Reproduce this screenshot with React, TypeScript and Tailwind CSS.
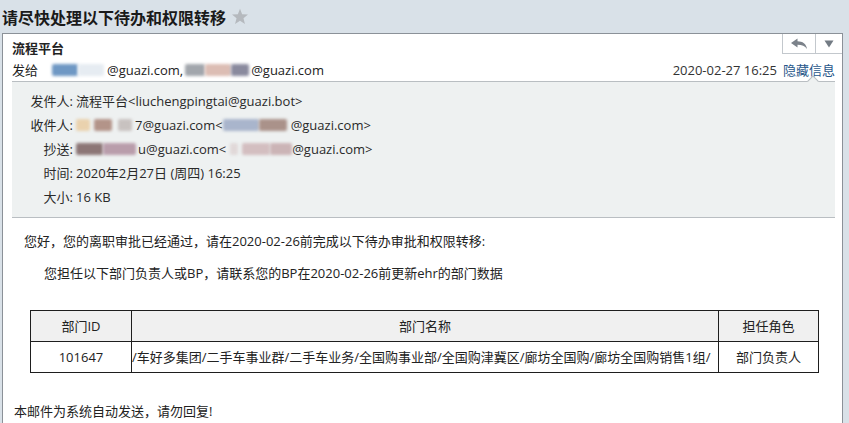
import React from "react";

function Blur({ w, c, ml = 0 }: { w: number; c: string; ml?: number }) {
  return (
    <span
      className="inline-block h-[12px] align-middle blur-[1.5px] rounded-[2px]"
      style={{ width: w, background: c, marginLeft: ml }}
    />
  );
}

export default function App() {
  return (
    <div className="w-[849px] h-[423px] overflow-hidden bg-[#d9e1e8] font-['Open_Sans','Noto_Sans_CJK_SC',sans-serif] text-[#222] flex flex-col">
      {/* title bar */}
      <div className="h-[33px] shrink-0 flex items-center pl-[2px]">
        <span className="text-[16px] font-bold leading-[20px] text-[#1a1a1a] font-['Noto_Sans_CJK_SC',sans-serif]">请尽快处理以下待办和权限转移</span>
        <svg width="18" height="17" viewBox="0 0 24 23" className="ml-[5px]">
          <path d="M12 1 L14.9 8.3 L22.8 8.8 L16.7 13.8 L18.7 21.5 L12 17.3 L5.3 21.5 L7.3 13.8 L1.2 8.8 L9.1 8.3 Z" fill="#b5b9be" />
        </svg>
      </div>

      {/* panel */}
      <div className="ml-[2px] w-[841px] flex-1 bg-white border-l border-t border-r border-[#8b9198] flex flex-col">
        {/* header row 1 */}
        <div className="h-[24px] flex justify-between items-start">
          <div className="pl-[9px] pt-[4px] text-[13px] leading-[20px] font-bold">流程平台</div>
          <div className="h-[20px] flex border-l border-b border-[#c3c8cd] bg-white">
            <div className="w-[33px] h-full flex items-center justify-center border-r border-[#c3c8cd]">
              <svg width="18" height="12" viewBox="0 0 18 12">
                <path d="M1 5 L7.5 0.5 L7.5 3.3 C12.5 3.3 16.5 6 17 11 C15 8 12 6.8 7.5 6.8 L7.5 9.6 Z" fill="#7b828a" />
              </svg>
            </div>
            <div className="w-[26px] h-full flex items-center justify-center">
              <svg width="10" height="8" viewBox="0 0 10 8">
                <path d="M0.5 0.5 L9.5 0.5 L5 7.5 Z" fill="#737b84" />
              </svg>
            </div>
          </div>
        </div>
        {/* header row 2 */}
        <div className="h-[23px] flex justify-between items-center text-[13px] leading-[22px]">
          <div className="pl-[9px] flex items-center">
            <span>发给</span>
            <span className="inline-flex items-center ml-[14px] w-[55px]">
              <Blur w={26} c="#6f98c4" />
              <Blur w={26} c="#e6ecf2" />
            </span>
            <span>@guazi.com,</span>
            <span className="inline-flex items-center ml-[2px]">
              <Blur w={20} c="#a2a6ac" />
              <Blur w={26} c="#dcbdb4" />
              <Blur w={18} c="#8a8a9e" />
            </span>
            <span className="ml-[2px]">@guazi.com</span>
          </div>
          <div className="pr-[7px] flex items-center">
            <span className="text-[#333]">2020-02-27 16:25</span>
            <span className="ml-[6px] text-[#27568a]">隐藏信息</span>
          </div>
        </div>

        {/* details box */}
        <div className="relative ml-[9px] w-[823px] bg-[#eef1f1] border-t border-b border-[#b9bec2] pt-[7px] pb-[8px] text-[13px] leading-[24px] text-[#2a2a2a]">
          <span className="absolute -top-[5px] left-[797px] w-[8px] h-[8px] bg-[#eef1f1] border-l border-t border-[#b9bec2] rotate-45" />
          <div className="flex">
            <span className="w-[61px] text-right">发件人:</span>
            <span className="ml-[3px]">流程平台&lt;liuchengpingtai@guazi.bot&gt;</span>
          </div>
          <div className="flex items-center">
            <span className="w-[61px] text-right">收件人:</span>
            <span className="inline-flex items-center ml-[3px] w-[59px]">
              <Blur w={14} c="#ead2ae" />
              <Blur w={18} c="#b39489" ml={4} />
              <Blur w={14} c="#c8c2c0" ml={6} />
            </span>
            <span>7@guazi.com&lt;</span>
            <span className="inline-flex items-center w-[68px]">
              <Blur w={36} c="#a9b5cc" />
              <Blur w={28} c="#aa928a" />
            </span>
            <span>@guazi.com&gt;</span>
          </div>
          <div className="flex items-center">
            <span className="w-[61px] text-right">抄送:</span>
            <span className="inline-flex items-center ml-[3px] w-[62px]">
              <Blur w={27} c="#8c7676" />
              <Blur w={33} c="#b99dab" />
            </span>
            <span>u@guazi.com&lt;</span>
            <span className="inline-flex items-center w-[66px]">
              <Blur w={8} c="#e0d8d8" ml={4} />
              <Blur w={28} c="#d3bec0" ml={4} />
              <Blur w={22} c="#cbb4b6" />
            </span>
            <span>@guazi.com&gt;</span>
          </div>
          <div className="flex">
            <span className="w-[61px] text-right">时间:</span>
            <span className="ml-[3px]">2020年2月27日 (周四) 16:25</span>
          </div>
          <div className="flex">
            <span className="w-[61px] text-right">大小:</span>
            <span className="ml-[3px]">16 KB</span>
          </div>
        </div>

        {/* body */}
        <div className="text-[13px] leading-[20px] text-[#222]">
          <div className="mt-[13px] pl-[21px]">您好，您的离职审批已经通过，请在2020-02-26前完成以下待办审批和权限转移:</div>
          <div className="mt-[12px] pl-[41px]">您担任以下部门负责人或BP，请联系您的BP在2020-02-26前更新ehr的部门数据</div>

          <table className="mt-[27px] ml-[27px] w-[789px] border-collapse border border-[#1e1e1e] text-[13px] text-[#222]">
            <thead>
              <tr className="h-[31px] bg-[#f0f0f0]">
                <th className="w-[101px] border border-[#1e1e1e] font-normal text-center p-0">部门ID</th>
                <th className="border border-[#1e1e1e] font-normal text-center p-0">部门名称</th>
                <th className="w-[100px] border border-[#1e1e1e] font-normal text-center p-0">担任角色</th>
              </tr>
            </thead>
            <tbody>
              <tr className="h-[31px]">
                <td className="border border-[#1e1e1e] text-center p-0">101647</td>
                <td className="border border-[#1e1e1e] text-left p-0 whitespace-nowrap">/车好多集团/二手车事业群/二手车业务/全国购事业部/全国购津冀区/廊坊全国购/廊坊全国购销售1组/</td>
                <td className="border border-[#1e1e1e] text-center p-0">部门负责人</td>
              </tr>
            </tbody>
          </table>

          <div className="mt-[28px] pl-[11px]">本邮件为系统自动发送，请勿回复!</div>
        </div>
      </div>
    </div>
  );
}
